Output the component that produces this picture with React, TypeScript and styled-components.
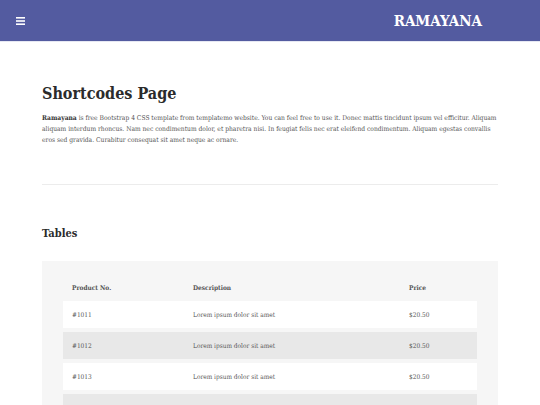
import styled, { createGlobalStyle } from "styled-components";

const GlobalStyle = createGlobalStyle`
  * { box-sizing: border-box; }
  body {
    margin: 0;
    background: #ffffff;
    font-family: "DejaVu Serif Condensed", "DejaVu Serif", "Liberation Serif", serif;
    color: #4a4a4a;
  }
  #root {
    opacity: 0.999;
  }
`;

interface Product {
  id: string;
  description: string;
  price: string;
}

const products: Product[] = [
  { id: "#1011", description: "Lorem ipsum dolor sit amet", price: "$20.50" },
  { id: "#1012", description: "Lorem ipsum dolor sit amet", price: "$20.50" },
  { id: "#1013", description: "Lorem ipsum dolor sit amet", price: "$20.50" },
  { id: "#1014", description: "Lorem ipsum dolor sit amet", price: "$20.50" },
];

export default function App() {
  return (
    <>
      <GlobalStyle />
      <Header>
        <MenuButton aria-label="menu">
          <svg width="9" height="8" viewBox="0 0 9 8">
            <rect x="0" y="0" width="9" height="1.6" fill="#fff" />
            <rect x="0" y="3.2" width="9" height="1.6" fill="#fff" />
            <rect x="0" y="6.4" width="9" height="1.6" fill="#fff" />
          </svg>
        </MenuButton>
        <Brand>RAMAYANA</Brand>
      </Header>
      <Main>
        <Title>Shortcodes Page</Title>
        <Intro>
          <strong>Ramayana</strong> is free Bootstrap 4 CSS template from
          templatemo website. You can feel free to use it. Donec mattis
          tincidunt ipsum vel efficitur. Aliquam aliquam interdum rhoncus. Nam
          nec condimentum dolor, et pharetra nisi. In feugiat felis nec erat
          eleifend condimentum. Aliquam egestas convallis eros sed gravida.
          Curabitur consequat sit amet neque ac ornare.
        </Intro>
        <Divider />
        <SectionTitle>Tables</SectionTitle>
        <TablePanel>
          <Table>
            <thead>
              <tr>
                <HeadCell $width="121px">Product No.</HeadCell>
                <HeadCell>Description</HeadCell>
                <HeadCell $width="77px">Price</HeadCell>
              </tr>
            </thead>
            <tbody>
              {products.map((p, i) => (
                <Row key={p.id} $striped={i % 2 === 1}>
                  <Cell>{p.id}</Cell>
                  <Cell>{p.description}</Cell>
                  <Cell>{p.price}</Cell>
                </Row>
              ))}
            </tbody>
          </Table>
        </TablePanel>
      </Main>
    </>
  );
}

const Header = styled.header`
  height: 42px;
  background: #535ba0;
  border-bottom: 1px solid #e6e8f3;
  display: flex;
  align-items: center;
  justify-content: space-between;
  padding: 0 58px 0 16px;
`;

const MenuButton = styled.button`
  background: none;
  border: none;
  padding: 0;
  display: flex;
  cursor: pointer;
`;

const Brand = styled.div`
  color: #ffffff;
  font-weight: 700;
  font-size: 15px;
`;

const Main = styled.main`
  width: 456px;
  margin: 0 auto;
  padding-top: 41px;
`;

const Title = styled.h1`
  margin: 0;
  font-size: 16px;
  font-weight: 700;
  color: #2b2b2b;
  line-height: 22px;
`;

const Intro = styled.p`
  margin: 8px 0 0;
  font-size: 6.65px;
  line-height: 11px;
  color: #555;

  strong {
    color: #333;
  }
`;

const Divider = styled.hr`
  border: none;
  border-top: 1px solid #ececec;
  margin: 38px 0 0;
`;

const SectionTitle = styled.h2`
  margin: 42px 0 0;
  font-size: 11px;
  font-weight: 700;
  color: #2b2b2b;
  line-height: 14px;
`;

const TablePanel = styled.div`
  margin-top: 20px;
  background: #f6f6f6;
  padding: 8px 21px 0;
`;

const Table = styled.table`
  width: 100%;
  border-collapse: separate;
  border-spacing: 0 4.7px;
  font-size: 6.5px;
  color: #555;
`;

const HeadCell = styled.th<{ $width?: string }>`
  text-align: left;
  font-weight: 700;
  padding: 5px 9px 0;
  height: 24px;
  width: ${(p) => p.$width ?? "auto"};
  color: #555;
`;

const Row = styled.tr<{ $striped: boolean }>`
  background: ${(p) => (p.$striped ? "#e8e8e8" : "#ffffff")};
`;

const Cell = styled.td`
  height: 27px;
  padding: 0 9px;
`;
